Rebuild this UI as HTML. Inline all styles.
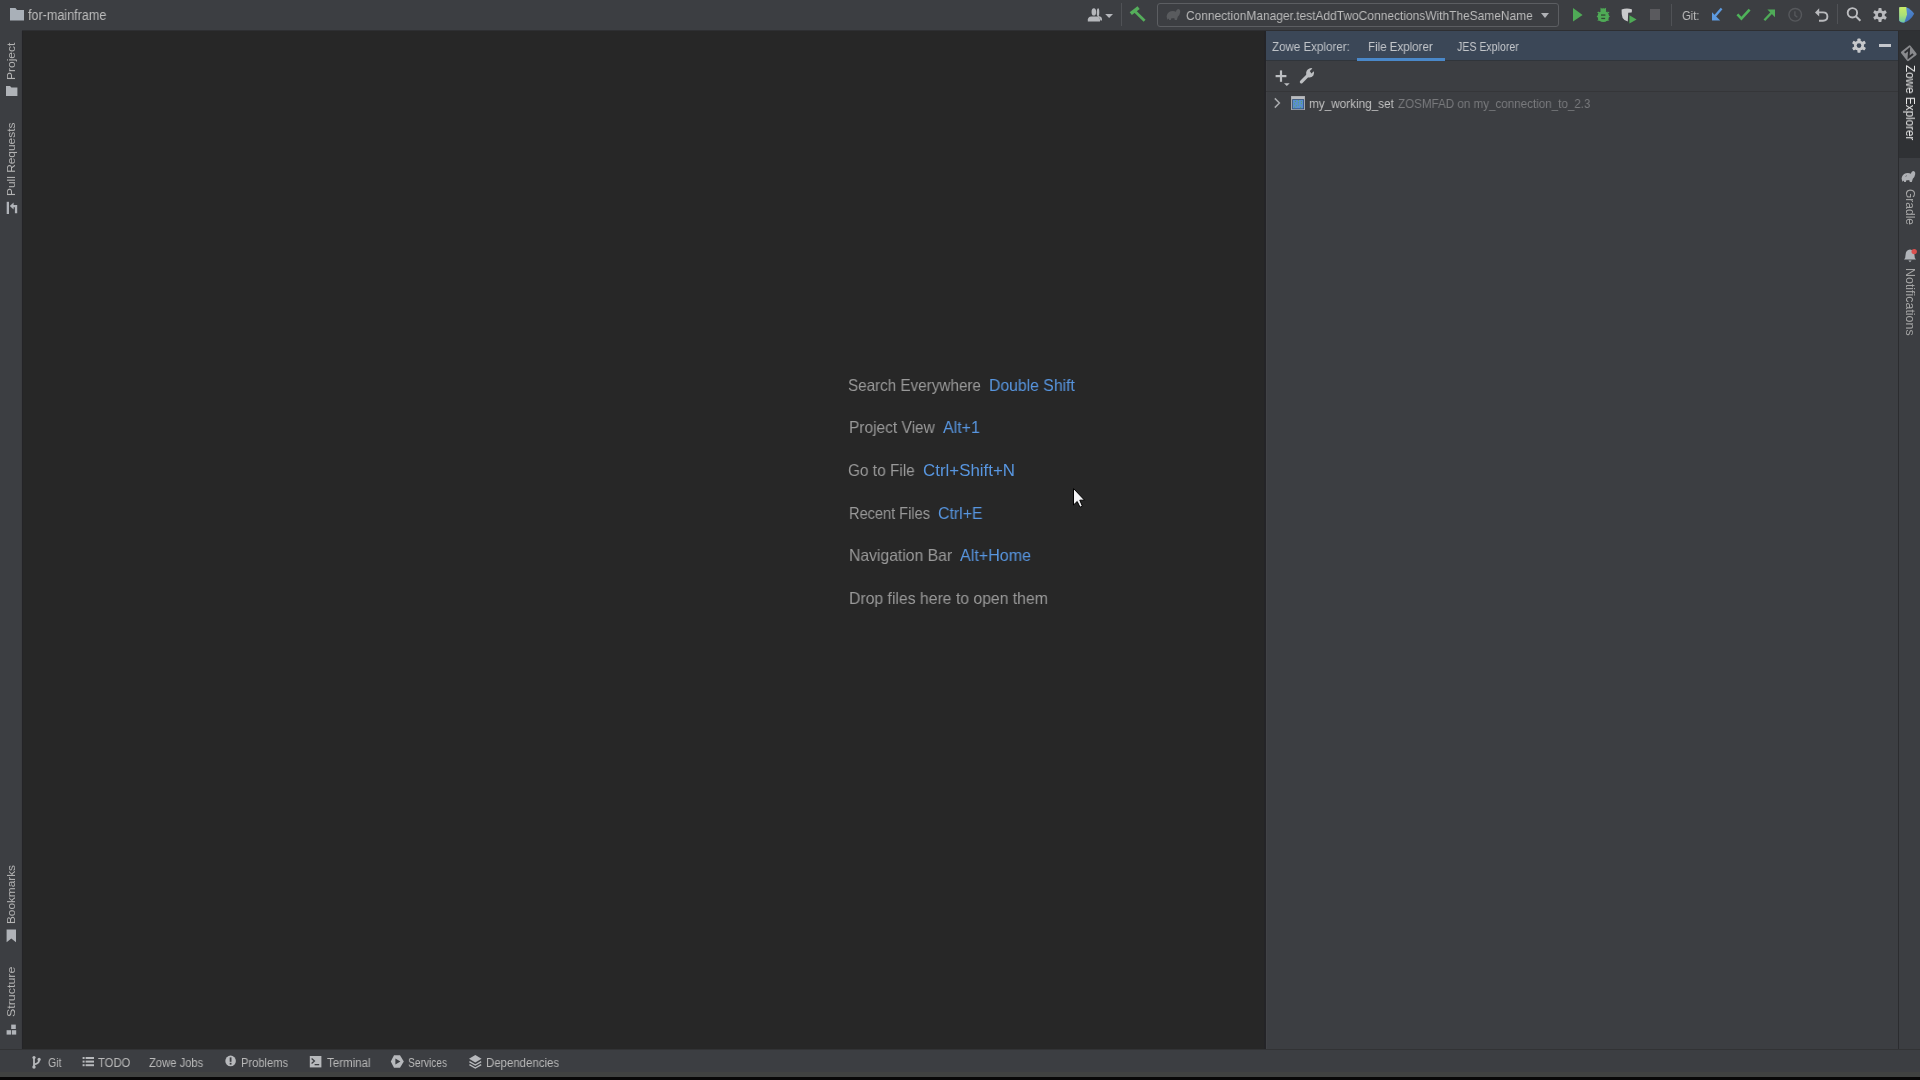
<!DOCTYPE html>
<html><head><meta charset="utf-8">
<style>
*{margin:0;padding:0;box-sizing:border-box}
html,body{width:1920px;height:1080px;overflow:hidden;background:#000;font-family:"Liberation Sans",sans-serif}
.a{position:absolute}
svg{position:absolute;overflow:visible}
.t{position:absolute;white-space:nowrap;line-height:1;transform-origin:0 0;will-change:transform}
#title{left:0;top:0;width:1920px;height:31px;background:#3c3e42}
#tline{left:22px;top:30px;width:1898px;height:1px;background:#2e2f32}
#lstrip{left:0;top:31px;width:21px;height:1018px;background:#3c3e42}
#lsep{left:21px;top:31px;width:1px;height:1018px;background:#3a3b3f}
#lsep2{left:22px;top:31px;width:1px;height:1018px;background:#242427}
#editor{left:23px;top:31px;width:1241px;height:1018px;background:#272727}
#esep{left:1264px;top:31px;width:2px;height:1018px;background:#242427}
#eedge{left:1266px;top:31px;width:1px;height:1018px;background:#414246}
#panel{left:1267px;top:31px;width:631px;height:1018px;background:#3c3e42}
#phead{left:1266px;top:31px;width:632px;height:29px;background:#3b4757}
#phline{left:1266px;top:60px;width:632px;height:1px;background:#30353b}
#pline{left:1266px;top:91px;width:632px;height:1px;background:#353639}
#uline{left:1357px;top:58px;width:88px;height:3px;background:#4a88c9}
#rsep{left:1898px;top:31px;width:1px;height:1018px;background:#2b2c2f}
#rstrip{left:1899px;top:31px;width:21px;height:1018px;background:#3c3e42}
#ractive{left:1899px;top:31px;width:21px;height:127px;background:#2f3134}
#bsep{left:0;top:1049px;width:1920px;height:1px;background:#323335}
#bottom{left:0;top:1050px;width:1920px;height:22px;background:#3c3e42}
#bottom2{left:0;top:1072px;width:1920px;height:5px;background:#404241}
#black{left:0;top:1077px;width:1920px;height:3px;background:#080808}
.wt{position:absolute;left:849px;font-size:15px;line-height:1;color:#9a9a9a;white-space:nowrap}
.wt b{font-weight:normal;color:#5896e0;margin-left:9px}
.vt{position:absolute;white-space:nowrap;font-size:12px;line-height:1;color:#b4b4b4;transform-origin:0 0;will-change:transform}
.bt{position:absolute;white-space:nowrap;font-size:12px;line-height:1;color:#b9b9b9}
</style></head><body>
<div id="title" class="a"></div>
<div id="tline" class="a"></div>
<div id="lstrip" class="a"></div>
<div id="lsep" class="a"></div>
<div id="lsep2" class="a"></div>
<div id="editor" class="a"></div>
<div id="esep" class="a"></div>
<div id="eedge" class="a"></div>
<div id="panel" class="a"></div>
<div id="phead" class="a"></div>
<div id="phline" class="a"></div>
<div id="pline" class="a"></div>
<div id="uline" class="a"></div>
<div id="rsep" class="a"></div>
<div id="rstrip" class="a"></div>
<div id="ractive" class="a"></div>
<div id="bsep" class="a"></div>
<div id="bottom" class="a"></div>
<div id="bottom2" class="a"></div>
<div id="black" class="a"></div>

<!-- title bar left -->
<svg style="left:10px;top:8px" width="15" height="13" viewBox="0 0 15 13">
  <path d="M0 0H5.5L7 2H14V12.5H0Z" fill="#a9b0b8"/>
</svg>
<div class="t" style="left:27.8px;top:9.42px;font-size:13.8px;transform:scaleX(0.9122);color:#bcbcbc">for-mainframe</div>


<!-- title toolbar -->
<svg style="left:1086px;top:6px" width="30" height="17" viewBox="0 0 30 17">
  <g fill="#b5b7bb">
  <path d="M10.8 8.6 Q10.6 2.3 12.1 2.3 Q13.3 2.3 13.3 6.5 Q13.3 9.2 12.6 10 Q15.9 10.6 16 13.2 L16 14.5 L14.5 14.5 Q14 11.6 11.8 11.1Z" />
  <ellipse cx="7.85" cy="5.9" rx="2.3" ry="3.6"/>
  <path d="M1.8 15.6 V13.6 Q2 10.9 5.2 10.5 H10.6 Q13.9 10.9 14 13.6 V15.6Z"/>
  <path d="M19.2 8 H27 L23.1 12Z"/>
  </g>
</svg>
<div class="a" style="left:1121px;top:3px;width:1px;height:23px;background:#505256"></div>
<svg style="left:1128px;top:5px" width="20" height="20" viewBox="0 0 20 20">
  <g stroke="#55ae5b" stroke-linecap="butt" fill="none">
  <path d="M2.8 8.6 L10.6 2.6" stroke-width="3.6"/>
  <path d="M6.6 6 L16.6 15.8" stroke-width="2.7"/>
  </g>
</svg>
<div class="a" style="left:1157px;top:3px;width:402px;height:24px;border:1px solid #5c5e62;border-radius:3px"></div>
<svg style="left:1163px;top:4px" width="22" height="20" viewBox="0 0 22 20">
  <path d="M4.4 15.8 L3.6 12.6 Q4 8.4 7.8 7.2 Q10.8 6.4 12.8 7.8 Q13.4 5.4 15 5 Q17.6 5.2 17.2 8.2 Q16.8 11 14.8 12.8 L13.8 16 H11.8 L11.2 14 Q9.6 14.6 8.4 14.2 L7.8 16 H6.2 L5.8 14.4 Z" fill="#595b5e"/>
</svg>
<div class="t" style="left:1186.0px;top:9.17px;font-size:13.5px;transform:scaleX(0.8852);color:#bbbbbb">ConnectionManager.testAddTwoConnectionsWithTheSameName</div>
<svg style="left:1540px;top:12px" width="10" height="7" viewBox="0 0 10 7">
  <path d="M1 1H9L5 6Z" fill="#b0b2b6"/>
</svg>
<svg style="left:1572px;top:7px" width="12" height="16" viewBox="0 0 12 16">
  <path d="M1 1 V14.6 L10.6 7.9Z" fill="#4faa56"/>
</svg>
<svg style="left:1595px;top:6px" width="17" height="18" viewBox="0 0 17 18">
  <g fill="#4faa56">
  <circle cx="8.3" cy="10.4" r="5.7"/>
  <ellipse cx="8.3" cy="4.6" rx="2.8" ry="2.4"/>
  <path d="M5.4 1.4 L7.4 3.2 L5.8 4.2Z M11.2 1.4 L9.2 3.2 L10.8 4.2Z"/>
  <path d="M2 6.6 L4 5.6 L4.4 7.8Z M14.6 6.6 L12.6 5.6 L12.2 7.8Z M1.6 10.4 L3.2 9.2 L3.2 11.6Z M15 10.4 L13.4 9.2 L13.4 11.6Z M2.2 14.6 L4 12.8 L4.8 14.8Z M14.4 14.6 L12.6 12.8 L11.8 14.8Z"/>
  </g>
  <g fill="#314b33"><rect x="6" y="8.4" width="4.4" height="1.3"/><rect x="6.3" y="11.8" width="3.8" height="1.3"/></g>
</svg>
<svg style="left:1620px;top:7px" width="19" height="18" viewBox="0 0 19 18">
  <path d="M1.6 2.4 Q6.6 0.6 11.8 2.2 Q12.2 4 11.6 5.6 L8.2 5.8 L7.8 14.4 Q4.2 13.8 2.6 11 Q1.4 8 1.6 2.4Z" fill="#c9cacc"/>
  <path d="M9.4 8.2 V16.6 L16.6 12.4Z" fill="#4faa56"/>
</svg>
<div class="a" style="left:1650px;top:9px;width:10px;height:11px;background:#5a5a5e"></div>
<div class="a" style="left:1671px;top:4px;width:1px;height:22px;background:#505256"></div>
<div class="t" style="left:1681.6px;top:9.2px;font-size:13px;transform:scaleX(0.8632);color:#bdbdbd">Git:</div>
<svg style="left:1710px;top:6px" width="15" height="17" viewBox="0 0 15 17">
  <path d="M11.6 2.6 L4.6 10.6" stroke="#5d9ae0" stroke-width="2.3" fill="none"/>
  <path d="M2 6.2 V14.6 H10.2 Z" fill="#5d9ae0"/>
</svg>
<svg style="left:1735px;top:6px" width="18" height="17" viewBox="0 0 18 17">
  <path d="M2.4 8.4 L6.4 12.6 L14.6 3.6" stroke="#4fb35a" stroke-width="2.6" fill="none"/>
</svg>
<svg style="left:1761px;top:7px" width="17" height="17" viewBox="0 0 17 17">
  <path d="M3.4 13.2 L10.6 5.6" stroke="#4fab58" stroke-width="2.3" fill="none"/>
  <path d="M6.4 2.6 H14 V10.2 Z" fill="#4fab58"/>
</svg>
<svg style="left:1787px;top:6px" width="17" height="18" viewBox="0 0 17 18">
  <circle cx="8.2" cy="8.8" r="6.3" stroke="#56585c" stroke-width="1.4" fill="none"/>
  <path d="M7.9 5.2 V9.4 L10.4 11.2" stroke="#56585c" stroke-width="1.3" fill="none"/>
</svg>
<svg style="left:1813px;top:6px" width="17" height="18" viewBox="0 0 17 18">
  <path d="M4 6.4 H10 Q14.4 6.4 14.4 10.6 Q14.4 14.8 10 14.8 H6" stroke="#b9babd" stroke-width="1.9" fill="none"/>
  <path d="M2 6.4 L6.2 2.2 V10.6Z" fill="#b9babd"/>
</svg>
<div class="a" style="left:1837px;top:4px;width:1px;height:20px;background:#505256"></div>
<svg style="left:1845px;top:5px" width="19" height="19" viewBox="0 0 19 19">
  <circle cx="7.4" cy="7.8" r="4.7" stroke="#bcbdc0" stroke-width="1.9" fill="none"/>
  <path d="M10.8 11.2 L15.4 15.8" stroke="#bcbdc0" stroke-width="2" fill="none"/>
</svg>
<svg style="left:1871px;top:6px" width="18" height="18" viewBox="0 0 18 18">
  <g fill="#b9babd"><circle cx="9" cy="9" r="4.8"/><rect x="7.4" y="1.9000000000000004" width="3.2" height="14.2" rx="0.8" transform="rotate(0 9 9)"/><rect x="7.4" y="1.9000000000000004" width="3.2" height="14.2" rx="0.8" transform="rotate(60 9 9)"/><rect x="7.4" y="1.9000000000000004" width="3.2" height="14.2" rx="0.8" transform="rotate(120 9 9)"/></g>
  <circle cx="9" cy="9" r="2.2" fill="#3c3e42"/>
</svg>
<svg style="left:1898px;top:3px" width="20" height="22" viewBox="0 0 20 22">
  <defs><linearGradient id="tg" x1="0" y1="0" x2="0" y2="1"><stop offset="0" stop-color="#c9ec66"/><stop offset="0.55" stop-color="#a9df78"/><stop offset="1" stop-color="#6fc8a2"/></linearGradient>
  <linearGradient id="tbl" x1="0" y1="0" x2="0.6" y2="1"><stop offset="0" stop-color="#5e9be0"/><stop offset="1" stop-color="#3f6fb8"/></linearGradient></defs>
  <path d="M1.2 4.6 Q1.4 4 3 4 H7.6 Q13.6 6.4 16.2 10.8 Q12.6 17.8 5.4 19.8 Q1.4 19.2 1.2 17.2 Z" fill="url(#tbl)"/>
  <path d="M1.2 4.6 Q1.4 4 3 4 H8.2 L9 11.4 L6.4 19.4 Q1.4 19 1.2 17.2 Z" fill="url(#tg)"/>
</svg>


<!-- zowe panel -->
<div class="t" style="left:1272.0px;top:40.0px;font-size:13px;transform:scaleX(0.8897);color:#bfc3c8">Zowe Explorer:</div>
<div class="t" style="left:1368.31px;top:40.0px;font-size:13px;transform:scaleX(0.8861);color:#c3c6ca">File Explorer</div>
<div class="t" style="left:1456.8px;top:40.0px;font-size:13px;transform:scaleX(0.8145);color:#c3c6ca">JES Explorer</div>
<svg style="left:1850px;top:36px" width="18" height="18" viewBox="0 0 18 18">
  <g fill="#c6c8cb"><circle cx="9" cy="9.6" r="5.0"/><rect x="7.4" y="2.3999999999999995" width="3.2" height="14.4" rx="0.8" transform="rotate(0 9 9.6)"/><rect x="7.4" y="2.3999999999999995" width="3.2" height="14.4" rx="0.8" transform="rotate(60 9 9.6)"/><rect x="7.4" y="2.3999999999999995" width="3.2" height="14.4" rx="0.8" transform="rotate(120 9 9.6)"/></g>
  <circle cx="9" cy="9.6" r="2.3" fill="#3b4757"/>
</svg>
<div class="a" style="left:1879px;top:44px;width:12px;height:3px;background:#c4c7cc"></div>
<svg style="left:1272px;top:66px" width="22" height="22" viewBox="0 0 22 22">
  <g fill="#bdbfc2">
  <rect x="3.6" y="9" width="10.8" height="2.2"/>
  <rect x="7.9" y="4.4" width="2.2" height="11.4"/>
  <path d="M12 17.2 H17.7 L14.85 19.9Z"/>
  </g>
</svg>
<svg style="left:1298px;top:66px" width="20" height="20" viewBox="0 0 20 20">
  <path d="M3.4 15.8 L9.6 9.6" stroke="#bdbfc2" stroke-width="3.2" stroke-linecap="round" fill="none"/>
  <path d="M8.2 8.4 Q7.6 4 11.4 2.4 Q13.2 1.8 14.4 2.4 L11.8 5 L13.4 7.6 L15.8 5.2 Q16.6 7.4 15.4 9.4 Q13.4 12 10 11.2Z" fill="#bdbfc2"/>
</svg>
<!-- tree row -->
<svg style="left:1273px;top:97px" width="9" height="12" viewBox="0 0 9 12">
  <path d="M1.8 1.4 L6.4 6 L1.8 10.6" stroke="#a9abae" stroke-width="1.5" fill="none"/>
</svg>
<svg style="left:1290px;top:95px" width="16" height="16" viewBox="0 0 16 16">
  <rect x="1" y="1" width="14" height="14" fill="#a3a6aa"/>
  <rect x="1.6" y="1.6" width="12.8" height="2.4" fill="#b9bbbe"/>
  <rect x="2.2" y="4.2" width="11.8" height="10" fill="#2f4f7a"/>
  <rect x="3" y="5" width="10.2" height="8.4" fill="#5a8ed0"/>
  <g fill="#5fa85a"><circle cx="5.4" cy="6.4" r="0.6"/><circle cx="8.4" cy="5.6" r="0.6"/><circle cx="11.4" cy="6.6" r="0.6"/><circle cx="4.4" cy="8.8" r="0.6"/><circle cx="8.4" cy="7.8" r="0.6"/><circle cx="11.4" cy="8.6" r="0.6"/><circle cx="8.4" cy="10" r="0.6"/><circle cx="6.4" cy="10.8" r="0.6"/><circle cx="4.6" cy="12.2" r="0.6"/><circle cx="10.6" cy="12.4" r="0.6"/></g>
</svg>
<div class="t" style="left:1308.73px;top:97.37px;font-size:13.5px;transform:scaleX(0.8701);color:#c1c1c1">my_working_set</div>
<div class="t" style="left:1397.7px;top:97.37px;font-size:13.5px;transform:scaleX(0.861);color:#797a7d">ZOSMFAD on my_connection_to_2.3</div>

<!-- left strip -->
<div class="vt" style="left:6px;top:80.3px;font-size:11.5px;transform:rotate(-90deg) scaleX(1.045)">Project</div>
<svg style="left:5px;top:85px" width="13" height="12" viewBox="0 0 13 12">
  <path d="M1 1 H5 L6.4 2.6 H12.4 V11 H1Z" fill="#b0b3b8"/>
</svg>
<div class="vt" style="left:6px;top:196.4px;font-size:11.5px;transform:rotate(-90deg) scaleX(1.035)">Pull Requests</div>
<svg style="left:5px;top:201px" width="13" height="14" viewBox="0 0 13 14">
  <g fill="#b0b3b8"><rect x="1.7" y="0.8" width="2.3" height="12.2"/><path d="M4.8 5.1 L8.6 1.6 V4 H12.2 V12.2 H9.9 V6.3 H8.6 V8.6Z"/></g>
</svg>
<div class="vt" style="left:6px;top:924.2px;font-size:11.5px;transform:rotate(-90deg) scaleX(1.025)">Bookmarks</div>
<svg style="left:5px;top:929px" width="13" height="14" viewBox="0 0 13 14">
  <path d="M1.6 0.6 H11 V13.2 L6.3 9.6 L1.6 13.2Z" fill="#b0b3b8"/>
</svg>
<div class="vt" style="left:6px;top:1017.4px;font-size:11.5px;transform:rotate(-90deg) scaleX(1.08)">Structure</div>
<svg style="left:5px;top:1024px" width="13" height="12" viewBox="0 0 13 12">
  <g fill="#b0b3b8"><rect x="6.2" y="0.6" width="4.6" height="4.4"/><rect x="1.6" y="6.2" width="4.4" height="4.4"/><rect x="6.8" y="6.2" width="4.4" height="4.4"/></g>
</svg>
<!-- right strip -->
<svg style="left:1899px;top:43px" width="20" height="20" viewBox="0 0 20 20">
  <g transform="rotate(-38 9.8 10.3)">
  <rect x="3.8" y="4.3" width="12" height="12" rx="1.4" fill="#898a8d"/>
  <path d="M6.9 7.2 H12.6 L7.1 13.4 H12.8" stroke="#2d2e31" stroke-width="1.9" fill="none"/>
  </g>
</svg>
<div class="vt" style="left:1915.5px;top:65px;color:#e6e6e6;transform:rotate(90deg) scaleX(0.975)">Zowe Explorer</div>
<svg style="left:1898px;top:166px" width="22" height="20" viewBox="0 0 22 20">
  <path d="M4.4 15.8 L3.6 12.6 Q4 8.4 7.8 7.2 Q10.8 6.4 12.8 7.8 Q13.4 5.4 15 5 Q17.6 5.2 17.2 8.2 Q16.8 11 14.8 12.8 L13.8 16 H11.8 L11.2 14 Q9.6 14.6 8.4 14.2 L7.8 16 H6.2 L5.8 14.4 Z" fill="#aeb0b4"/>
  <path d="M8.6 9.2 L7.6 11" stroke="#6d6f73" stroke-width="0.8"/>
</svg>
<div class="vt" style="left:1915.5px;top:189px;color:#a6a6a6;transform:rotate(90deg)">Gradle</div>
<svg style="left:1902px;top:247px" width="16" height="17" viewBox="0 0 16 17">
  <path d="M2 12.6 Q3.6 11.4 3.6 7.6 Q3.8 3.2 8 2.6 Q12.2 3.2 12.4 7.6 Q12.4 11.4 14 12.6Z" fill="#b0b3b8"/>
  <path d="M6.4 13.4 H9.6 L8 15.2Z" fill="#b0b3b8"/>
  <circle cx="12.2" cy="4.6" r="2.7" fill="#d9504f"/>
</svg>
<div class="vt" style="left:1915.5px;top:267.5px;color:#a6a6a6;transform:rotate(90deg) scaleX(1.035)">Notifications</div>
<!-- bottom bar -->
<svg style="left:30px;top:1055px" width="13" height="15" viewBox="0 0 13 15">
  <g fill="none" stroke="#b7b9bc" stroke-width="1.8"><path d="M4 2.4 V12"/><path d="M9.1 4.4 Q9.4 8.6 4.2 9.4"/></g>
  <circle cx="4" cy="12" r="1.7" fill="#b7b9bc"/><circle cx="4" cy="2.6" r="1.6" fill="#b7b9bc"/><circle cx="9.1" cy="4.4" r="1.6" fill="#b7b9bc"/>
</svg>
<div class="t" style="left:47.6px;top:1056.74px;font-size:12px;transform:scaleX(0.8812);color:#b9b9b9">Git</div>
<svg style="left:82px;top:1056px" width="13" height="12" viewBox="0 0 13 12">
  <g fill="#b7b9bc"><rect x="0.6" y="1" width="2" height="2"/><rect x="3.6" y="1" width="8.4" height="2"/><rect x="0.6" y="4.6" width="2" height="2"/><rect x="3.6" y="4.6" width="8.4" height="2"/><rect x="0.6" y="8.2" width="2" height="2"/><rect x="3.6" y="8.2" width="8.4" height="2"/></g>
</svg>
<div class="t" style="left:98.0px;top:1056.74px;font-size:12px;transform:scaleX(0.9412);color:#b9b9b9">TODO</div>
<div class="t" style="left:148.6px;top:1056.74px;font-size:12px;transform:scaleX(0.9345);color:#b9b9b9">Zowe Jobs</div>
<svg style="left:224px;top:1054px" width="14" height="14" viewBox="0 0 14 14">
  <circle cx="6.6" cy="6.9" r="5.3" fill="#b7b9bc"/>
  <rect x="5.7" y="3.4" width="1.8" height="4.4" fill="#3c3e42"/><rect x="5.7" y="8.8" width="1.8" height="1.8" fill="#3c3e42"/>
</svg>
<div class="t" style="left:240.67px;top:1056.74px;font-size:12px;transform:scaleX(0.928);color:#b9b9b9">Problems</div>
<svg style="left:309px;top:1055px" width="14" height="14" viewBox="0 0 14 14">
  <rect x="0.8" y="1" width="11.6" height="11.4" fill="#b7b9bc"/>
  <path d="M2.6 3.6 L5.4 6 L2.6 8.4" stroke="#3c3e42" stroke-width="1.3" fill="none"/>
  <rect x="5.6" y="9" width="4.6" height="1.3" fill="#3c3e42"/>
</svg>
<div class="t" style="left:326.5px;top:1056.74px;font-size:12px;transform:scaleX(0.96);color:#b9b9b9">Terminal</div>
<svg style="left:390px;top:1054px" width="15" height="15" viewBox="0 0 15 15">
  <path d="M4 1.2 H10 L13.8 7.5 L10 13.8 H4 L0.8 7.5Z" fill="#b7b9bc"/>
  <path d="M5.4 4.4 V10.6 L10.4 7.5Z" fill="#3c3e42"/>
</svg>
<div class="t" style="left:408.4px;top:1056.74px;font-size:12px;transform:scaleX(0.85);color:#b9b9b9">Services</div>
<svg style="left:468px;top:1054px" width="15" height="15" viewBox="0 0 15 15">
  <path d="M7.3 1 L13.6 4.8 L7.3 8.6 L1 4.8Z" fill="#b7b9bc"/>
  <path d="M1.4 7.6 L7.3 11 L13.2 7.6 M1.4 10.6 L7.3 14 L13.2 10.6" stroke="#b7b9bc" stroke-width="1.4" fill="none"/>
</svg>
<div class="t" style="left:485.65px;top:1056.74px;font-size:12px;transform:scaleX(0.9526);color:#b9b9b9">Dependencies</div>

<!-- welcome -->
<div class="t" style="left:848.08px;top:377.03px;font-size:16.5px;transform:scaleX(0.9231);color:#9a9a9a">Search Everywhere</div>
<div class="t" style="left:989.04px;top:377.03px;font-size:16.5px;transform:scaleX(0.9551);color:#5896e0">Double Shift</div>
<div class="t" style="left:848.66px;top:419.33px;font-size:16.5px;transform:scaleX(0.9385);color:#9a9a9a">Project View</div>
<div class="t" style="left:943.3px;top:419.33px;font-size:16.5px;transform:scaleX(0.9658);color:#5896e0">Alt+1</div>
<div class="t" style="left:848.47px;top:461.83px;font-size:16.5px;transform:scaleX(0.9336);color:#9a9a9a">Go to File</div>
<div class="t" style="left:922.68px;top:461.83px;font-size:16.5px;transform:scaleX(1.0239);color:#5896e0">Ctrl+Shift+N</div>
<div class="t" style="left:849.12px;top:504.73px;font-size:16.5px;transform:scaleX(0.8835);color:#9a9a9a">Recent Files</div>
<div class="t" style="left:938.24px;top:504.73px;font-size:16.5px;transform:scaleX(0.9622);color:#5896e0">Ctrl+E</div>
<div class="t" style="left:848.75px;top:547.23px;font-size:16.5px;transform:scaleX(0.9533);color:#9a9a9a">Navigation Bar</div>
<div class="t" style="left:960.3px;top:547.23px;font-size:16.5px;transform:scaleX(0.974);color:#5896e0">Alt+Home</div>
<div class="t" style="left:848.74px;top:590.23px;font-size:16.5px;transform:scaleX(0.9551);color:#9a9a9a">Drop files here to open them</div>

<!-- mouse cursor -->
<svg style="left:1073px;top:488px" width="13" height="20" viewBox="0 0 13 20">
  <path d="M0.5 0.5V17L4.2 13.5L7 19.2L9.4 18.2L6.8 12.2H11.6Z" fill="#f4f4f6" stroke="#000" stroke-width="1"/>
</svg>
</body></html>
